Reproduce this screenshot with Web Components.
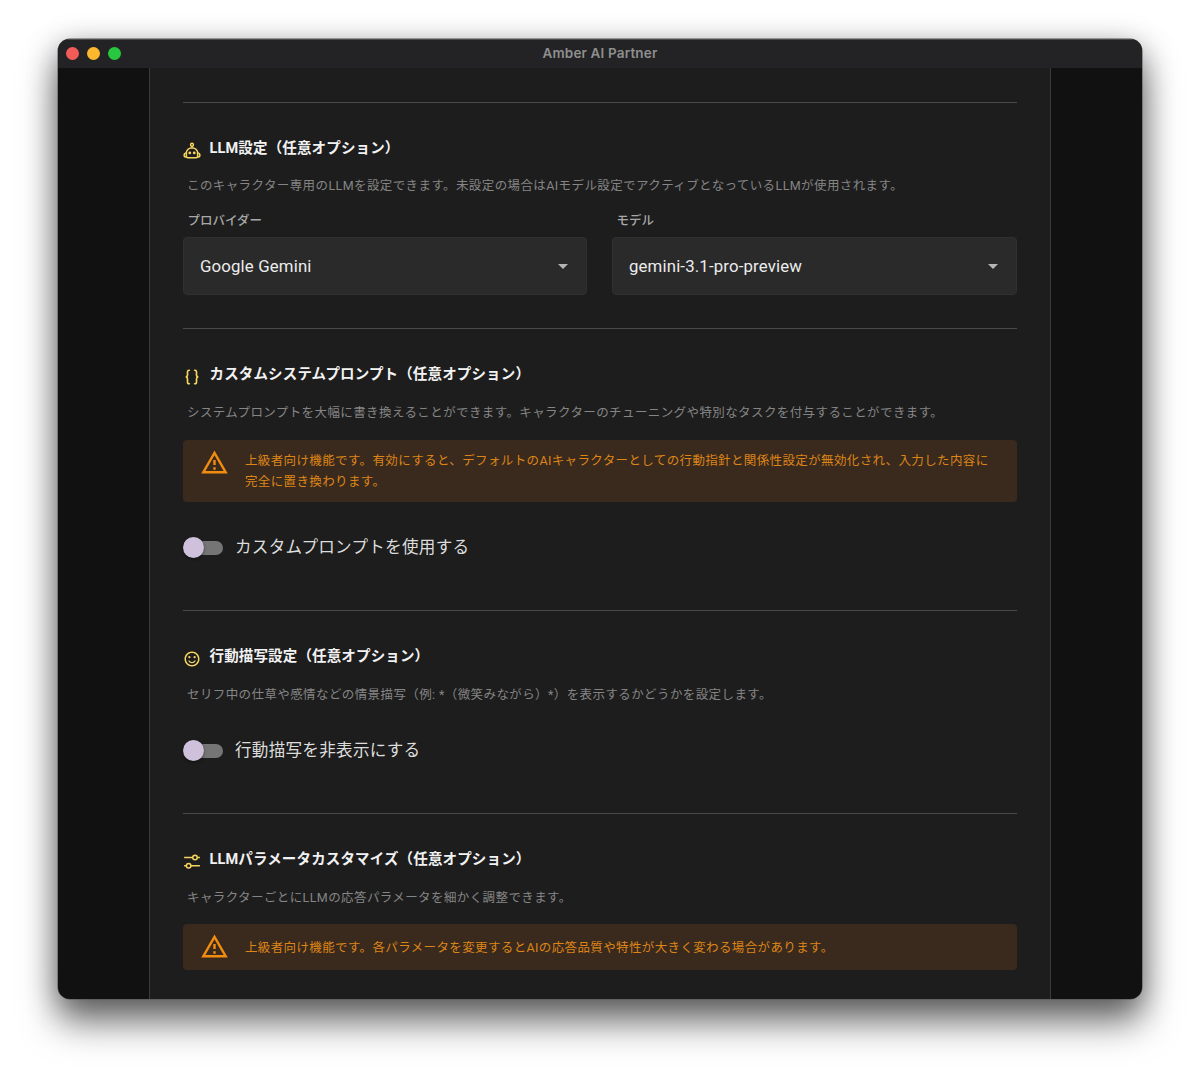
<!DOCTYPE html>
<html lang="ja"><head><meta charset="utf-8">
<style>
html,body{margin:0;padding:0;background:#fff;}
body{width:1200px;height:1076px;overflow:hidden;font-family:Roboto,"Noto Sans CJK JP",sans-serif;}
</style></head><body>
<template id="t-window"><style>
:host{box-sizing:border-box;width:1084px;height:960px;margin:39px 58px 0;border-radius:12px;overflow:hidden;background:#111;box-shadow:0 0 0 .5px #555,0 24px 36px rgba(0,0,0,.5),0 6px 30px rgba(0,0,0,.35);display:flex;flex-direction:column;}
.bar{flex:none;height:29px;background:#232325;display:flex;align-items:center;position:relative;justify-content:center;color:#8f8f8f;font:600 13.5px Inter,Roboto,sans-serif;letter-spacing:.15px;border-top:1px solid #4a4a4a;box-sizing:border-box;padding-bottom:2px}
.dots{position:absolute;left:8px;top:7px;display:flex;gap:8px}
.dots i{width:13px;height:13px;border-radius:50%;display:block}
.main{flex:1;display:flex;justify-content:center;min-height:0}
.panel{box-sizing:border-box;width:902px;background:#1d1d1d;border:solid #3a3a3a;border-width:0 1px;padding:0 33px;overflow:hidden}
</style><div class="bar"><div class="dots"><i style="background:#f25b57"></i><i style="background:#fbb72e"></i><i style="background:#27c73f"></i></div>Amber AI Partner</div>
<div class="main"><div class="panel"><slot></slot></div></div></template>

<template id="t-section"><style>
:host{display:block;border-top:1px solid #4a4a4a;padding-top:34px;margin-top:33px}
:host([first]){margin-top:34px}
h3{margin:0;display:flex;align-items:center;gap:8px;height:24px;font:700 14.5px/24px Roboto,"Noto Sans CJK JP",sans-serif;letter-spacing:.15px;color:#f2f2f2;margin-bottom:14px}
:host([first]) h3{margin-bottom:13px}
.ic{width:18px;height:18px;display:flex;color:#f6d55c;flex:none;margin-top:4px}
#t{margin-left:.5px}
p{margin:0 0 0 4px;font:400 12.5px/24px Roboto,"Noto Sans CJK JP",sans-serif;letter-spacing:.4px;color:#858585}
</style><h3><span class="ic"><slot name="icon"></slot></span><span id="t"></span></h3><p id="d"></p><slot></slot></template>

<template id="t-select"><style>
:host{display:block;min-width:0}
label{display:block;margin-left:4.5px;font:500 12.5px/18px Roboto,"Noto Sans CJK JP",sans-serif;letter-spacing:0;color:#a8a8a8;height:25px}
.box{height:58px;box-sizing:border-box;background:#2a2a2a;border:1px solid #303030;border-radius:4px;display:flex;align-items:center;justify-content:space-between;padding:0 18px 0 16px;font:400 16.8px Roboto,sans-serif;color:#ececec;letter-spacing:.15px}
.a{width:0;height:0;border-left:5.5px solid transparent;border-right:5.5px solid transparent;border-top:5.5px solid #b5b5b5}
</style><label id="l"></label><div class="box"><span id="v"></span><span class="a"></span></div></template>

<template id="t-alert"><style>
:host{display:flex;align-items:center;box-sizing:border-box;background:#3a2a1e;border-radius:4px;padding:0 17px;gap:16px;color:#dd8517;font:400 12.5px/21px Roboto,"Noto Sans CJK JP",sans-serif;letter-spacing:.37px}
svg{width:29px;height:29px;flex:none;fill:#f28c0f;align-self:flex-start;margin-top:8px}
div{flex:1}
</style><svg viewBox="0 0 24 24"><path d="M12 5.99 19.53 19H4.47L12 5.99M12 2 1 21h22L12 2zm1 14h-2v2h2v-2zm0-6h-2v4h2v-4z"/></svg><div><slot></slot></div></template>

<template id="t-toggle"><style>
:host{display:flex;align-items:center;height:40px;padding-bottom:9px;gap:12px;font:400 16.6px/24px Roboto,"Noto Sans CJK JP",sans-serif;color:#dcdcdc;letter-spacing:.25px}
.sw{position:relative;width:40px;height:22px;flex:none}
.tr{position:absolute;left:3px;right:0;top:4px;height:14px;border-radius:7px;background:#757575}
.th{position:absolute;left:0;top:0;width:21px;height:21px;border-radius:50%;background:#cfc1dc;box-shadow:0 1px 3px rgba(0,0,0,.5)}
</style><span class="sw"><span class="tr"></span><span class="th"></span></span><span><slot></slot></span></template>

<script>
const tpl=id=>document.getElementById(id).content.cloneNode(true);
class AppWindow extends HTMLElement{constructor(){super();this.attachShadow({mode:'open'}).append(tpl('t-window'));}}
class SettingsSection extends HTMLElement{constructor(){super();this.attachShadow({mode:'open'}).append(tpl('t-section'));}
connectedCallback(){const r=this.shadowRoot;r.getElementById('t').textContent=this.getAttribute('heading');r.getElementById('d').textContent=this.getAttribute('desc');}}
class SelectField extends HTMLElement{constructor(){super();this.attachShadow({mode:'open'}).append(tpl('t-select'));}
connectedCallback(){const r=this.shadowRoot;r.getElementById('l').textContent=this.getAttribute('label');r.getElementById('v').textContent=this.getAttribute('value');}}
class AlertBox extends HTMLElement{constructor(){super();this.attachShadow({mode:'open'}).append(tpl('t-alert'));}}
class ToggleRow extends HTMLElement{constructor(){super();this.attachShadow({mode:'open'}).append(tpl('t-toggle'));}}
class FieldGrid extends HTMLElement{constructor(){super();this.attachShadow({mode:'open'}).innerHTML='<style>:host{display:grid;grid-template-columns:404px 405px;gap:25px;margin-top:14px}</style><slot></slot>';}}
customElements.define('app-window',AppWindow);
customElements.define('settings-section',SettingsSection);
customElements.define('select-field',SelectField);
customElements.define('alert-box',AlertBox);
customElements.define('toggle-row',ToggleRow);
customElements.define('field-grid',FieldGrid);
</script>

<app-window>
<settings-section first heading="LLM設定（任意オプション）" desc="このキャラクター専用のLLMを設定できます。未設定の場合はAIモデル設定でアクティブとなっているLLMが使用されます。">
<svg slot="icon" viewBox="0 0 24 24" width="18" height="18" fill="none" stroke="currentColor" stroke-width="2"><circle cx="12" cy="3.600" r="1.900"/><path d="M12 5.500v2"/><path d="M4.500 16v-1.500a6.500 6.500 0 0 1 6.500-6.500h2a6.500 6.500 0 0 1 6.500 6.500V19a2 2 0 0 1-2 2h-11a2 2 0 0 1-2-2z"/><path d="M4.500 14.500c-2 .3-3 1.500-3 3s1 2.600 3 2.600M19.500 14.500c2 .3 3 1.500 3 3s-1 2.600-3 2.600"/><circle cx="9" cy="14.500" r="1.900" fill="currentColor" stroke="none"/><circle cx="15" cy="14.500" r="1.900" fill="currentColor" stroke="none"/></svg>
<field-grid>
<select-field label="プロバイダー" value="Google Gemini"></select-field>
<select-field label="モデル" value="gemini-3.1-pro-preview"></select-field>
</field-grid>
</settings-section>
<settings-section heading="カスタムシステムプロンプト（任意オプション）" desc="システムプロンプトを大幅に書き換えることができます。キャラクターのチューニングや特別なタスクを付与することができます。">
<svg slot="icon" viewBox="0 0 24 24" width="18" height="18" fill="none" stroke="currentColor" stroke-width="2.200" stroke-linecap="round"><path d="M8.500 3H8C6.500 3 6 4 6 5.500V9c0 1.800-.8 3-2.500 3C5.200 12 6 13.200 6 15v3.500C6 20 6.500 21 8 21h.5"/><path d="M15.500 3H16c1.500 0 2 1 2 2.500V9c0 1.800.8 3 2.500 3-1.700 0-2.500 1.200-2.500 3v3.500c0 1.500-.5 2.500-2 2.500h-.5"/></svg>
<alert-box style="margin-top:15px;height:62px">上級者向け機能です。有効にすると、デフォルトのAIキャラクターとしての行動指針と関係性設定が無効化され、入力した内容に完全に置き換わります。</alert-box>
<toggle-row style="margin-top:26px">カスタムプロンプトを使用する</toggle-row>
</settings-section>
<settings-section heading="行動描写設定（任意オプション）" desc="セリフ中の仕草や感情などの情景描写（例: *（微笑みながら）*）を表示するかどうかを設定します。">
<svg slot="icon" viewBox="0 0 24 24" width="18" height="18" fill="currentColor"><circle cx="15.500" cy="9.500" r="1.500"/><circle cx="8.500" cy="9.500" r="1.500"/><path d="M11.990 2C6.470 2 2 6.480 2 12s4.470 10 9.990 10C17.520 22 22 17.520 22 12S17.520 2 11.990 2zM12 20c-4.420 0-8-3.580-8-8s3.580-8 8-8 8 3.580 8 8-3.580 8-8 8zm0-4c-1.480 0-2.750-.81-3.450-2H6.880c.8 2.050 2.790 3.500 5.120 3.500s4.320-1.450 5.120-3.500h-1.670c-.69 1.190-1.970 2-3.450 2z"/></svg>
<toggle-row style="margin-top:24px">行動描写を非表示にする</toggle-row>
</settings-section>
<settings-section heading="LLMパラメータカスタマイズ（任意オプション）" desc="キャラクターごとにLLMの応答パラメータを細かく調整できます。">
<svg slot="icon" viewBox="0 0 24 24" width="18" height="18" fill="none" stroke="currentColor" stroke-width="2"><path d="M1.500 6h11.500M19.500 6h3M1.500 17h3M10.500 17h12"/><circle cx="16" cy="6" r="3"/><circle cx="7.500" cy="17" r="3"/></svg>
<alert-box style="margin-top:14px;height:46px">上級者向け機能です。各パラメータを変更するとAIの応答品質や特性が大きく変わる場合があります。</alert-box>
</settings-section>
</app-window>
</body></html>
